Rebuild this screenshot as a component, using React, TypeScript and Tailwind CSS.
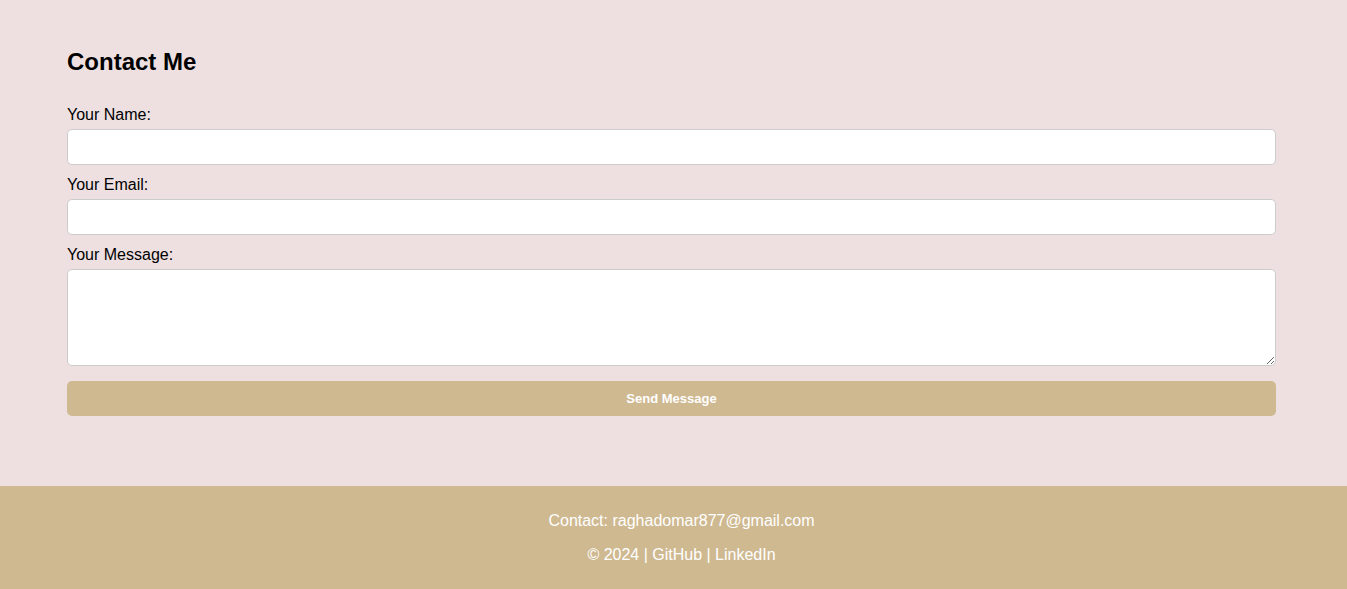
export default function App() {
  return (
    <div className="min-h-[589px] flex flex-col bg-[#eee0e1]" style={{ fontFamily: '"Liberation Sans", Arial, sans-serif' }}>
      <section className="pl-[67px] pt-[48px] pb-[70px]">
        <div className="w-[1209px]">
          <h2 className="text-[24px] font-bold leading-[28px] text-black">Contact Me</h2>
          <form className="mt-[30px] flex flex-col" onSubmit={(e) => e.preventDefault()}>
            <label className="block text-[16px] leading-[18px] text-black">Your Name:</label>
            <input type="text" className="mt-[5px] h-[36px] w-full rounded-[5px] border border-[#cccccc] bg-white px-2 outline-none" />
            <label className="mt-[11px] block text-[16px] leading-[18px] text-black">Your Email:</label>
            <input type="email" className="mt-[5px] h-[36px] w-full rounded-[5px] border border-[#cccccc] bg-white px-2 outline-none" />
            <label className="mt-[11px] block text-[16px] leading-[18px] text-black">Your Message:</label>
            <textarea className="mt-[5px] h-[97px] w-full rounded-[5px] border border-[#cccccc] bg-white px-2 outline-none" />
            <button type="submit" className="mt-[15px] h-[35px] w-full rounded-[5px] bg-[#cfb991] text-[13px] font-bold text-white">
              Send Message
            </button>
          </form>
        </div>
      </section>
      <footer className="flex-1 bg-[#cfb991] pl-[16px] pt-[26px] pb-[16px] text-center text-[16px] leading-[18px] text-white">
        <p>Contact: raghadomar877@gmail.com</p>
        <p className="mt-[16px]">© 2024 | GitHub | LinkedIn</p>
      </footer>
    </div>
  );
}
